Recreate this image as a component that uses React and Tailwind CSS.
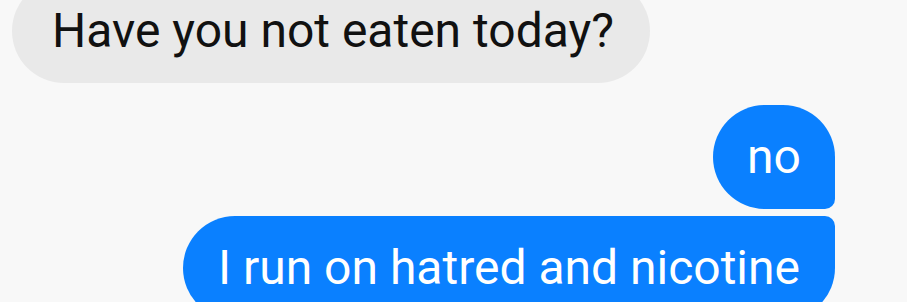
const font = { fontFamily: "Roboto, 'Noto Sans', sans-serif" };

export default function App() {
  return (
    <div
      className="w-[907px] h-[302px] overflow-hidden bg-[#f8f8f8] text-[48px] leading-[56px]"
      style={font}
    >
      <div className="flex flex-col">
        <div className="-mt-[21px] ml-[12px] self-start rounded-[52px] bg-[#e9e9e9] pl-[40px] pr-[36px] py-[24px] text-[#111]">
          Have you not eaten today?
        </div>
        <div className="mt-[22px] mr-[72px] self-end rounded-[52px] rounded-br-[10px] bg-[#0a80ff] px-[34px] py-[24px] text-white">
          no
        </div>
        <div className="mt-[7px] mr-[72px] self-end rounded-[52px] rounded-tr-[10px] bg-[#0a80ff] px-[35px] py-[24px] text-white">
          I run on hatred and nicotine
        </div>
      </div>
    </div>
  );
}
